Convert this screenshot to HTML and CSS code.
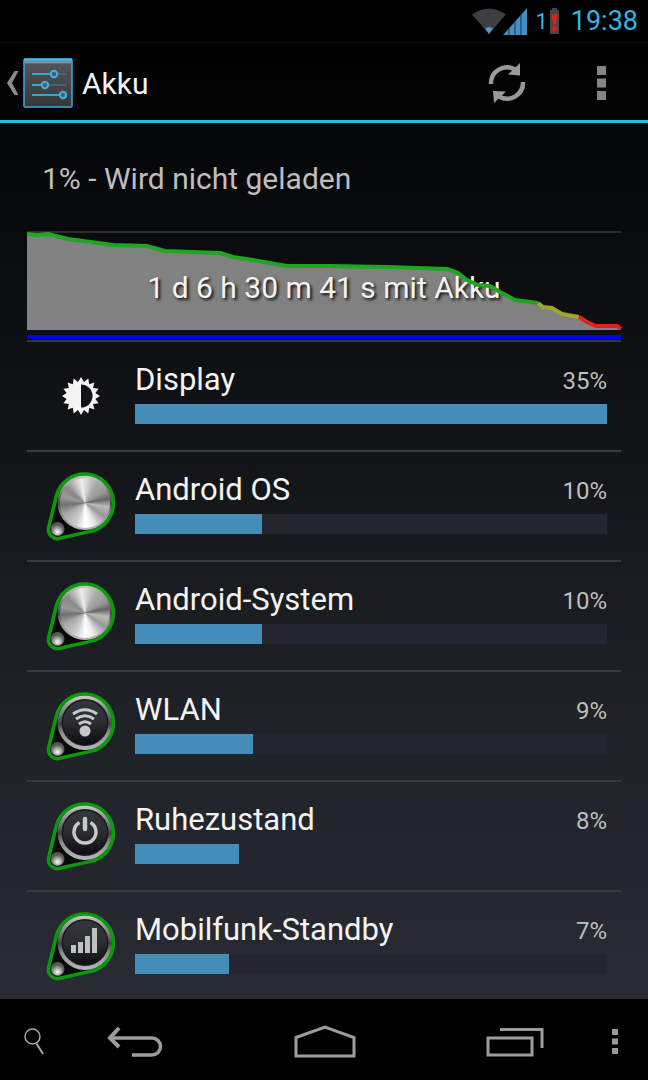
FILE: index.html
```html
<!DOCTYPE html>
<html lang="de">
<head>
    <meta charset="UTF-8">
    <meta name="viewport" content="width=device-width, initial-scale=1.0">
    <title>Akku</title>
    <link rel="stylesheet" href="styles.css">
</head>
<body>

    <!-- Shared shapes -->
    <svg class="defs" width="0" height="0" aria-hidden="true">
        <defs>
            <linearGradient id="ring" x1="0" y1="0" x2="0" y2="1">
                <stop offset="0" stop-color="#ccc"/>
                <stop offset="0.3" stop-color="#808080"/>
                <stop offset="0.52" stop-color="#444"/>
                <stop offset="0.7" stop-color="#909090"/>
                <stop offset="1" stop-color="#b8b8b8"/>
            </linearGradient>
            <linearGradient id="face" x1="0" y1="0" x2="0" y2="1">
                <stop offset="0" stop-color="#33373a"/>
                <stop offset="0.5" stop-color="#2a2d31"/>
                <stop offset="1" stop-color="#0c0d10"/>
            </linearGradient>
            <radialGradient id="stud" cx="0.5" cy="0.7" r="0.6">
                <stop offset="0" stop-color="#fff"/>
                <stop offset="0.5" stop-color="#aaa"/>
                <stop offset="1" stop-color="#555"/>
            </radialGradient>
            <linearGradient id="tile" x1="0" y1="0" x2="0" y2="1">
                <stop offset="0" stop-color="#55585b"/>
                <stop offset="1" stop-color="#35383b"/>
            </linearGradient>
        </defs>
        <symbol id="dial" viewBox="0 0 72 72">
            <path d="M11.2 26.5A29 29 0 1 1 45.4 61.4L14.8 68.3A9 9 0 0 1 3.7 57.5Z" fill="#08090a"/>
            <circle cx="40" cy="32.500" r="27.500" fill="url(#ring)"/>
            <circle cx="40" cy="32.500" r="23.500" fill="#17191b"/>
            <circle cx="40" cy="32.500" r="22" fill="url(#face)"/>
            <circle cx="12.500" cy="59" r="7" fill="#555"/>
            <circle cx="12.500" cy="59.500" r="6" fill="url(#stud)"/>
            <path d="M11.2 26.5A29 29 0 1 1 45.4 61.4L14.8 68.3A9 9 0 0 1 3.7 57.5Z" fill="none" stroke="#0c9a0c" stroke-width="3.500"/>
        </symbol>
    </svg>

    <div class="statusbar">
        <svg width="34" height="26" viewBox="0 0 34 26" aria-hidden="true">
            <path d="M0 6.500Q17 -5.500 34 6.500L17 26Z" fill="#3c3e42"/>
            <path d="M13 20.500Q17 17.500 21 20.500L17 26Z" fill="#4a9acb"/>
        </svg>
        <svg class="signal" width="24" height="27" viewBox="0 0 24 27" aria-hidden="true">
            <path d="M0 27L24 0V27Z" fill="#4590c2"/>
            <path d="M6 20V27M12 13V27M18 6V27" stroke="#14394f" stroke-width="1"/>
        </svg>
        <span class="battery-level">1</span>
        <svg class="battery" width="9" height="26" viewBox="0 0 9 26" aria-hidden="true">
            <path d="M2 0H7V2H9V26H0V2H2Z" fill="#45474a"/>
            <path d="M2 6H7V10L6 16H3L2 10Z" fill="#e51c14"/>
            <circle cx="4.500" cy="20.500" r="2.500" fill="#e51c14"/>
        </svg>
        <time class="clock">19:38</time>
    </div>

    <header class="actionbar">
        <a class="up" href="#" aria-label="Zurück">
            <svg width="12" height="24" viewBox="0 0 12 24"><path d="M11.500 0H7.500L0 12L7.500 24H11.500L5 12Z" fill="#8a8a8a"/></svg>
            <svg width="50" height="50" viewBox="0 0 50 50">
                <rect x="1" y="1" width="48" height="48" rx="1" fill="url(#tile)" stroke="#3fa9dc" stroke-width="1.500"/>
                <path d="M1 2H49" stroke="#41b4e8" stroke-width="3"/>
                <path d="M2 4.500H48" stroke="#999" stroke-width="1.500"/>
                <path d="M9 16H43M9 27H43" stroke="#3a83ab" stroke-width="1"/>
                <path d="M9 16H28M9 27H19M9 37H37" stroke="#3aa3d6" stroke-width="2"/>
                <g fill="#4c6069" stroke="#3db1e6" stroke-width="2">
                    <circle cx="31" cy="16" r="3.200"/>
                    <circle cx="22" cy="27" r="3.200"/>
                    <circle cx="40" cy="37" r="3.200"/>
                </g>
            </svg>
        </a>
        <h1>Akku</h1>
        <button class="action" aria-label="Aktualisieren">
            <svg width="38" height="40" viewBox="0 0 38 40">
                <path d="M3 21A16 16 0 0 1 27 6.500" fill="none" stroke="#999" stroke-width="4.500"/>
                <path d="M32 0V12.500L20 11.500Z" fill="#999"/>
                <path d="M35 19A16 16 0 0 1 11 33.500" fill="none" stroke="#999" stroke-width="4.500"/>
                <path d="M6 40L5 28L18 28.500Z" fill="#999"/>
            </svg>
        </button>
        <button class="action" aria-label="Menü">
            <svg width="9" height="34" viewBox="0 0 9 34"><path d="M0 0H9V9H0ZM0 12.500H9V21.500H0ZM0 25H9V34H0Z" fill="#858585"/></svg>
        </button>
    </header>

    <main class="content">
        <p class="summary">1% - Wird nicht geladen</p>

        <div class="chart">
            <svg class="chart-area" viewBox="0 0 594 97" preserveAspectRatio="none" aria-hidden="true">
                <path d="M0 1L10 2L21 1L41 6L86 12L120 13L138 18L193 20L206 24L226 27L260 33L303 33L360 34L420 36L431 40L440 47L451 52L463 53L473 59L488 67L511 70L516 74L525 75L535 81L552 84L560 89L569 93L590 93L594 96V97H0Z" fill="#818181"/>
            </svg>
            <p class="chart-label">1 d 6 h 30 m 41 s mit Akku</p>
            <svg class="chart-line" viewBox="0 0 594 97" preserveAspectRatio="none" aria-hidden="true">
                <g fill="none" stroke-width="4" stroke-linejoin="round">
                    <path d="M0 1L10 2L21 1L41 6L86 12L120 13L138 18L193 20L206 24L226 27L260 33L303 33L360 34L420 36L431 40L440 47L451 52L463 53L473 59L488 67L511 70" stroke="#1fa51f"/>
                    <path d="M511 70L516 74L525 75L535 81L552 84" stroke="#a6a32a"/>
                    <path d="M552 84L560 89L569 93L590 93L594 96" stroke="#dc2418"/>
                </g>
            </svg>
            <div class="chart-usage"></div>
        </div>

        <ul class="usage">
            <li>
                <svg class="icon" viewBox="0 0 72 72" aria-hidden="true">
                    <path d="M36 17L39 22L43.300 18.400L44.200 24.200L49.400 22.600L48.100 28L53.600 28.700L50.400 33L55 36L50.400 39L53.600 43.300L48.100 44L49.400 49.400L44.200 47.800L43.300 53.600L39 50L36 55L33 50L28.700 53.600L27.800 47.800L22.600 49.400L23.900 44L18.400 43.300L21.600 39L17 36L21.600 33L18.400 28.700L23.900 28L22.600 22.600L27.800 24.200L28.700 18.400L33 22Z" fill="#f4f4f4"/>
                    <path d="M36 24.500A11.500 11.500 0 0 1 36 47.500Z" fill="#101215"/>
                </svg>
                <div class="info">
                    <div class="line"><span class="name">Display</span><span class="percent">35%</span></div>
                    <div class="bar"><div class="fill" style="width: 100%"></div></div>
                </div>
            </li>
            <li>
                <div class="icon">
                    <svg viewBox="0 0 72 72" aria-hidden="true"><use href="#dial"/></svg>
                    <span class="knob"></span>
                </div>
                <div class="info">
                    <div class="line"><span class="name">Android OS</span><span class="percent">10%</span></div>
                    <div class="bar"><div class="fill" style="width: 27%"></div></div>
                </div>
            </li>
            <li>
                <div class="icon">
                    <svg viewBox="0 0 72 72" aria-hidden="true"><use href="#dial"/></svg>
                    <span class="knob"></span>
                </div>
                <div class="info">
                    <div class="line"><span class="name">Android-System</span><span class="percent">10%</span></div>
                    <div class="bar"><div class="fill" style="width: 27%"></div></div>
                </div>
            </li>
            <li>
                <svg class="icon" viewBox="0 0 72 72" aria-hidden="true">
                    <use href="#dial"/>
                    <g fill="none" stroke="#c8c8c8" stroke-width="3">
                        <path d="M28 24Q40 15.500 52 24"/>
                        <path d="M31 29Q40 22.500 49 29"/>
                        <path d="M34 34Q40 29.500 46 34"/>
                    </g>
                    <circle cx="40" cy="41" r="5.500" fill="#c8c8c8"/>
                </svg>
                <div class="info">
                    <div class="line"><span class="name">WLAN</span><span class="percent">9%</span></div>
                    <div class="bar"><div class="fill" style="width: 25%"></div></div>
                </div>
            </li>
            <li>
                <svg class="icon" viewBox="0 0 72 72" aria-hidden="true">
                    <use href="#dial"/>
                    <path d="M34.500 22.500A11 11 0 1 0 45.500 22.500" fill="none" stroke="#c8c8c8" stroke-width="3.500"/>
                    <path d="M40 19V29" stroke="#c8c8c8" stroke-width="4.500" stroke-linecap="round"/>
                </svg>
                <div class="info">
                    <div class="line"><span class="name">Ruhezustand</span><span class="percent">8%</span></div>
                    <div class="bar"><div class="fill" style="width: 22%"></div></div>
                </div>
            </li>
            <li>
                <svg class="icon" viewBox="0 0 72 72" aria-hidden="true">
                    <use href="#dial"/>
                    <path d="M26 35H31V43H26ZM33 32H38V43H33ZM40 26H45V43H40ZM47 18H52V43H47Z" fill="#c0c0c0"/>
                </svg>
                <div class="info">
                    <div class="line"><span class="name">Mobilfunk-Standby</span><span class="percent">7%</span></div>
                    <div class="bar"><div class="fill" style="width: 20%"></div></div>
                </div>
            </li>
        </ul>
    </main>

    <nav class="navbar">
        <button aria-label="Suche">
            <svg width="20" height="27" viewBox="0 0 20 27" fill="none" stroke="#aaa"><circle cx="8.500" cy="8.500" r="7.500" stroke-width="1.500"/><path d="M12.500 15.500L19 26" stroke-width="2"/></svg>
        </button>
        <button aria-label="Zurück">
            <svg width="56" height="30" viewBox="0 0 56 30" fill="none" stroke="#9b9d9b" stroke-width="3.500"><path d="M3 11H45A8.500 8.500 0 0 1 45 28H25"/><path d="M12 1L3 11L12 20" stroke-width="4"/></svg>
        </button>
        <button aria-label="Startseite">
            <svg width="62" height="33" viewBox="0 0 62 33" fill="none" stroke="#9b9d9b" stroke-width="3"><path d="M2 12.500L31 2L60 12.500V31H2Z"/></svg>
        </button>
        <button aria-label="Letzte Apps">
            <svg width="58" height="30" viewBox="0 0 58 30" fill="none" stroke="#9b9d9b" stroke-width="3"><path d="M2 11H46V28H2ZM14 2.500H56V21"/></svg>
        </button>
        <button aria-label="Menü">
            <svg width="6" height="25" viewBox="0 0 6 25"><path d="M0 0H6V6H0ZM0 9.500H6V15.500H0ZM0 19H6V25H0Z" fill="#999"/></svg>
        </button>
    </nav>

</body>
</html>
```
FILE: styles.css
```css
* {
    box-sizing: border-box;
}
body {
    display: flex;
    flex-direction: column;
    height: 100vh;
    margin: 0;
    font-family: Roboto, sans-serif;
    font-size: 30px;
    color: #f3f3f3;
    background: linear-gradient(#000 4%, #050607 12%, #0d0f12 32%, #1e2226 66%, #25272f 83%, #292c34 93%);
    overflow: hidden;
}
svg {
    display: block;
}
.defs {
    position: absolute;
}
button {
    display: flex;
    align-items: center;
    justify-content: center;
    padding: 0;
    border: none;
    background: none;
    cursor: pointer;
}

/* Status bar */
.statusbar {
    display: flex;
    flex: none;
    align-items: center;
    justify-content: flex-end;
    height: 43px;
    padding-right: 10px;
    border-bottom: 1px solid #0c0c0c;
    background: #000;
    color: #33b5e5;
}
.signal {
    margin: 0 8px 0 -3px;
}
.battery-level {
    font-size: 22px;
}
.battery {
    margin: 0 12px 0 2px;
}
.clock {
    font-size: 27px;
}

/* Action bar */
.actionbar {
    display: flex;
    flex: none;
    align-items: center;
    height: 80px;
    padding: 2px 0 0 7px;
    border-bottom: 3px solid #33b5e5;
}
.up {
    display: flex;
    align-items: center;
    gap: 4px;
}
h1 {
    flex: 1;
    margin: 0 0 0 9px;
    padding-top: 2px;
    font-size: 30px;
    font-weight: normal;
}
.action {
    width: 94px;
    height: 75px;
}

/* Battery summary */
.content {
    flex: 1;
    min-height: 0;
    padding: 0 27px;
    overflow: hidden;
}
.summary {
    height: 108px;
    margin: 0;
    padding: 0 15px;
    line-height: 112px;
    color: #bebebe;
}
.chart {
    position: relative;
    height: 111px;
    border-top: 2px solid #2b2d2f;
    border-bottom: 2px solid #333638;
}
.chart-area,
.chart-line {
    position: absolute;
    top: 0;
    left: 0;
    width: 100%;
    height: 97px;
}
.chart-line {
    overflow: visible;
}
.chart-label {
    position: absolute;
    top: 0;
    left: 0;
    width: 100%;
    margin: 0;
    line-height: 110px;
    text-align: center;
    text-shadow: 2px 2px 3px #111;
}
.chart-usage {
    position: absolute;
    bottom: 1px;
    left: 0;
    width: 100%;
    height: 4px;
    background: #0000f5;
}

/* Usage list */
.usage {
    margin: 0;
    padding: 0;
    list-style: none;
}
.usage li {
    display: flex;
    align-items: center;
    gap: 18px;
    height: 110px;
    padding: 0 14px 0 18px;
    border-bottom: 2px solid #393c3e;
}
.icon {
    position: relative;
    flex: none;
    width: 72px;
    height: 72px;
}
.knob {
    position: absolute;
    top: 8px;
    left: 15px;
    width: 50px;
    height: 50px;
    border-radius: 50%;
    background: conic-gradient(#ddd, #aaa 30deg, #999 60deg, #666 80deg, #bbb 100deg, #999 125deg, #eee 160deg, #fff 180deg, #ccc 205deg, #aaa 240deg, #707070 265deg, #999 285deg, #888 310deg, #eee 350deg, #ddd);
}
.info {
    flex: 1;
    padding-bottom: 10px;
}
.line {
    display: flex;
    align-items: center;
    justify-content: space-between;
    height: 42px;
}
.name {
    font-size: 31px;
}
.percent {
    padding-top: 4px;
    font-size: 24px;
    color: #bebebe;
}
.bar {
    height: 20px;
    margin-top: 4px;
    background: #24252e;
}
.fill {
    height: 100%;
    background: #468cb9;
}

/* Navigation */
.navbar {
    display: grid;
    flex: none;
    grid-template-columns: 68px 11fr 20fr 11fr 66px;
    height: 81px;
    padding-top: 4px;
    background: #000;
}
```
